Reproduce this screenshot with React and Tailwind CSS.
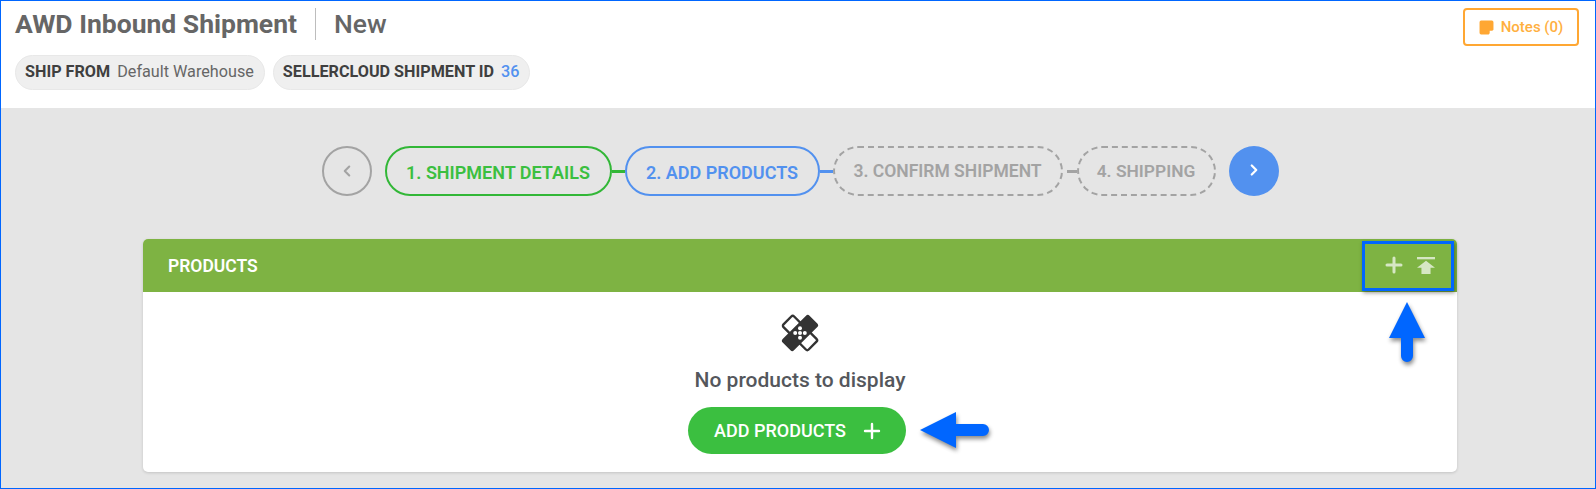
import React from 'react';
import { ChevronLeft, ChevronRight, Plus } from 'lucide-react';

function Chip({ label, value, valueClass }) {
  return (
    <div className="flex h-[35px] items-center gap-[7px] rounded-full border border-[#e8e8e8] bg-[#efefef] pl-[9px] pr-[10px] text-[16.2px]">
      <span className="font-bold text-[#3f3f3f]">{label}</span>
      <span className={valueClass}>{value}</span>
    </div>
  );
}

function Step({ label, className }) {
  return (
    <div className={`flex h-[50px] items-center justify-center rounded-full border-2 font-semibold ${className}`}>
      {label}
    </div>
  );
}

function BandAid() {
  return (
    <svg width="38" height="38" viewBox="0 0 38 38" className="block">
      <rect x="11.5" y="1.2" width="15" height="35.6" rx="2" fill="#fff" stroke="#333" strokeWidth="2.4" transform="rotate(-45 19 19)" />
      <rect x="0" y="11" width="38" height="16" rx="2.5" fill="#333" transform="rotate(-45 19 19)" />
      <g fill="#fff">
        <circle cx="19" cy="14.2" r="2" />
        <circle cx="14.2" cy="19" r="2" />
        <circle cx="23.8" cy="19" r="2" />
        <circle cx="19" cy="23.8" r="2" />
        <circle cx="19" cy="19" r="2" />
      </g>
    </svg>
  );
}

function UpArrow() {
  return (
    <svg width="44" height="70" viewBox="0 0 44 70" className="absolute left-[1384px] top-[299px] drop-shadow-[1px_3px_2px_rgba(0,0,0,0.45)]">
      <path d="M22 2 L40 38 L28 38 L28 56 A6 6 0 0 1 16 56 L16 38 L4 38 Z" fill="#0066ff" />
    </svg>
  );
}

function LeftArrow() {
  return (
    <svg width="76" height="40" viewBox="0 0 76 40" className="absolute left-[917px] top-[410px] drop-shadow-[1px_3px_2px_rgba(0,0,0,0.45)]">
      <path d="M2 19 L38 1 L38 13 L65 13 A6 6 0 0 1 65 25 L38 25 L38 37 Z" fill="#0066ff" />
    </svg>
  );
}

export default function App() {
  return (
    <div className="relative flex h-[489px] w-[1596px] flex-col overflow-hidden border border-[#0066ff] bg-[#e5e5e5] font-['Roboto',sans-serif]">
      <header className="flex h-[107px] shrink-0 items-start justify-between bg-white pl-[14px] pr-[16px] pt-[7px]">
        <div>
          <div className="flex h-[32px] items-center">
            <h1 className="text-[26.5px] font-bold text-[#666]">AWD Inbound Shipment</h1>
            <span className="ml-[18px] h-[32px] w-px bg-[#bdbdbd]" />
            <span className="ml-[18px] text-[26.5px] font-medium text-[#666]">New</span>
          </div>
          <div className="mt-[15px] flex gap-[8px]">
            <Chip label="SHIP FROM" value="Default Warehouse" valueClass="text-[#666]" />
            <Chip label="SELLERCLOUD SHIPMENT ID" value="36" valueClass="font-medium text-[#5291ef]" />
          </div>
        </div>
        <button className="flex h-[38px] w-[116px] items-center justify-center gap-[7px] rounded-[4px] border-2 border-[#ffa733] text-[15px] font-medium text-[#ffb03f]">
          <svg width="15" height="15" viewBox="0 0 14 14">
            <path d="M2 0.5 H12 A1.5 1.5 0 0 1 13.5 2 V9 L9 13.5 H2 A1.5 1.5 0 0 1 0.5 12 V2 A1.5 1.5 0 0 1 2 0.5 Z" fill="#ffa733" />
            <path d="M13.5 10 H10 V13.5 Z" fill="#fff" />
          </svg>
          Notes (0)
        </button>
      </header>

      <div className="flex items-center justify-center pl-[4px] pt-[38px]">
        <button className="mr-[13px] flex h-[50px] w-[50px] items-center justify-center rounded-full border-2 border-[#a3a3a3] text-[#a3a3a3]">
          <ChevronLeft size={18} strokeWidth={2.8} />
        </button>
        <Step label="1. SHIPMENT DETAILS" className="w-[227px] border-[#32b737] pt-[2px] text-[18px] text-[#3bbf40]" />
        <span className="h-[3px] w-[13px] bg-[#32b737]" />
        <Step label="2. ADD PRODUCTS" className="w-[195px] border-[#5291ef] pt-[2px] text-[18px] text-[#5291ef]" />
        <span className="h-[3px] w-[13px] bg-[#5291ef]" />
        <Step label="3. CONFIRM SHIPMENT" className="w-[230px] border-dashed border-[#a3a3a3] pt-[1px] text-[17.5px] text-[#a3a3a3]" />
        <span className="ml-[4px] h-[3px] w-[10px] bg-[#a3a3a3]" />
        <Step label="4. SHIPPING" className="w-[139px] border-dashed border-[#a3a3a3] pt-[1px] text-[17.4px] text-[#a3a3a3]" />
        <button className="ml-[13px] flex h-[50px] w-[50px] items-center justify-center rounded-full bg-[#5291ef] text-white">
          <ChevronRight size={18} strokeWidth={3} className="mb-[3px]" />
        </button>
      </div>

      <section className="ml-[142px] mt-[43px] w-[1314px] overflow-hidden rounded-[5px] bg-white shadow-[0_1px_3px_rgba(0,0,0,0.15)]">
        <div className="flex h-[53px] items-center justify-between bg-[#7eb343] pl-[25px] pr-[22px]">
          <span className="pt-[2px] text-[17.5px] font-semibold text-white">PRODUCTS</span>
          <div className="flex items-center gap-[11px] text-[#d6e7c4]">
            <Plus size={24} strokeWidth={3} className="mb-[2px]" />
            <svg width="18" height="17" viewBox="0 0 17 19" preserveAspectRatio="none" fill="currentColor">
              <rect x="0" y="0" width="17" height="2.6" />
              <path d="M8.5 4.2 L17 12 H12.8 V19 H4.2 V12 H0 Z" />
            </svg>
          </div>
        </div>
        <div className="flex h-[180px] flex-col items-center pt-[22px]">
          <BandAid />
          <p className="mt-[16px] text-[21px] font-medium leading-[24px] text-[#54575c]">No products to display</p>
          <button className="mr-[6px] mt-[15px] flex h-[47px] w-[218px] items-center justify-center gap-[14px] rounded-full bg-[#3bbf40] pl-[4px] text-[18px] font-medium text-white">
            ADD PRODUCTS
            <Plus size={24} strokeWidth={2.4} />
          </button>
        </div>
      </section>

      {/* annotations laid over the screenshot */}
      <div className="absolute left-[1361px] top-[240px] h-[50px] w-[92px] border-[3px] border-[#0066ff] shadow-[1px_2px_4px_rgba(0,0,0,0.4)]" />
      <UpArrow />
      <LeftArrow />
    </div>
  );
}
